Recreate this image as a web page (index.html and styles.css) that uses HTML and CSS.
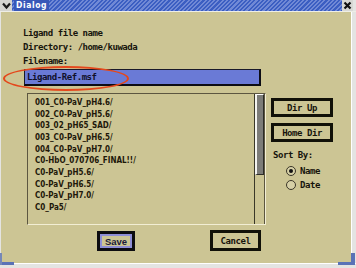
FILE: index.html
```html
<!DOCTYPE html>
<html>
<head>
<meta charset="utf-8">
<title>Dialog</title>
<link rel="stylesheet" href="styles.css">
</head>
<body>
<div class="window">
  <div class="titlebar">
    <span class="menu-icon"><svg width="11" height="11" viewBox="0 0 11 11"><path d="M2 3.5 L5.5 7.5 L9 3.5" fill="none" stroke="#1a1a1a" stroke-width="2.2"/></svg></span>
    <span class="title-area"><span class="title">Dialog</span></span>
    <span class="close"><svg width="11" height="11" viewBox="0 0 11 11"><path d="M2.5 2.5 L8.5 8.5 M8.5 2.5 L2.5 8.5" stroke="#111" stroke-width="2.2"/></svg></span>
  </div>
  <div class="frame">
    <div class="labels">
      <div>Ligand file name</div>
      <div>Directory: /home/kuwada</div>
      <div>Filename:</div>
    </div>
    <div class="field-wrap">
      <div class="field">Ligand-Ref.msf</div>
      <div class="highlight"></div>
    </div>
    <div class="main">
      <div class="listbox">
        <ul class="list">
          <li>001_C0-PaV_pH4.6/</li>
          <li>002_C0-PaV_pH5.6/</li>
          <li>003_02_pH65_SAD/</li>
          <li>003_C0-PaV_pH6.5/</li>
          <li>004_C0-PaV_pH7.0/</li>
          <li>C0-HbO_070706_FINAL!!/</li>
          <li>C0-PaV_pH5.6/</li>
          <li>C0-PaV_pH6.5/</li>
          <li>C0-PaV_pH7.0/</li>
          <li>C0_Pa5/</li>
        </ul>
        <div class="scrollbar"><div class="thumb"></div></div>
      </div>
      <div class="side">
        <button class="btn">Dir Up</button>
        <button class="btn">Home Dir</button>
        <div class="sort-label">Sort By:</div>
        <div class="radio"><span class="dot checked"></span>Name</div>
        <div class="radio"><span class="dot"></span>Date</div>
      </div>
    </div>
    <div class="actions">
      <button class="save">Save</button>
      <button class="btn cancel">Cancel</button>
    </div>
  </div>
  <div class="bottom-line"></div>
  <div class="corner corner-left"></div>
  <div class="corner corner-right"></div>
</div>
</body>
</html>
```
FILE: styles.css
```css
* { box-sizing: border-box; }
html, body { margin: 0; padding: 0; background: #e6e6e6; }
.window {
  position: relative;
  width: 356px;
  height: 268px;
  overflow: hidden;
  background: #e4e4e2;
  font-family: "DejaVu Sans Mono", "Liberation Mono", monospace;
  font-weight: bold;
  color: #16140c;
}
.titlebar {
  display: flex;
  height: 12px;
  border-bottom: 1px solid #eeeee6;
}
.menu-icon {
  width: 12px;
  height: 11px;
  background: #d4d4d0;
  display: flex;
  align-items: center;
  justify-content: center;
}
.title-area {
  flex: 1;
  background: repeating-linear-gradient(135deg, #3b5ec2 0 1.5px, #7089d6 1.5px 3px);
  display: flex;
  align-items: center;
  padding-left: 2px;
}
.title {
  background: #3858b8;
  color: #ffffff;
  font-family: "DejaVu Sans Condensed", "DejaVu Sans", sans-serif;
  font-size: 8.5px;
  letter-spacing: 0.6px;
  line-height: 11px;
  height: 11px;
  padding: 0 2px;
}
.close {
  width: 11px;
  height: 11px;
  background: #d8d8d4;
  margin-right: 3px;
  display: flex;
  align-items: center;
  justify-content: center;
}
.frame {
  margin-left: 1px;
  width: 351px;
  height: 251px;
  background: #ccc594;
  border-right: 1px solid #ffffff;
  padding: 14px 0 0 22px;
}
.labels {
  font-size: 9px;
  letter-spacing: -0.45px;
  line-height: 14px;
}
.field-wrap {
  position: relative;
  margin: 1px 0 0 1px;
  width: 237px;
}
.field {
  height: 17px;
  background: #6a7ad6;
  border-top: 1px solid #1a1a2a;
  border-left: 1px solid #1a1a2a;
  border-right: 2px solid #0c0c14;
  border-bottom: 2px solid #0c0c14;
  font-size: 9px;
  letter-spacing: -0.45px;
  line-height: 14px;
  padding-left: 2px;
  color: #10102a;
}
.highlight {
  position: absolute;
  left: -21px;
  top: -3px;
  width: 126px;
  height: 25px;
  border: 2px solid #e4481c;
  border-radius: 50%;
}
.main {
  display: flex;
  margin-top: 7px;
  gap: 5px;
}
.listbox {
  margin-left: 4px;
  width: 239px;
  height: 132px;
  display: flex;
  border-top: 1px solid #5c5640;
  border-left: 1px solid #5c5640;
  border-bottom: 1px solid #f2eed4;
  border-right: 1px solid #f2eed4;
}
.list {
  flex: 1;
  list-style: none;
  margin: 0;
  padding: 3px 0 0 7px;
  font-family: "DejaVu Sans Condensed", "Liberation Sans", sans-serif;
  font-size: 8px;
  line-height: 11.67px;
  color: #1e180a;
}
.scrollbar {
  width: 11px;
  border-left: 1px solid #3a3828;
  border-right: 1px solid #5c5640;
}
.thumb {
  height: 81px;
  background: #7c7c78;
  border-top: 1px solid #ffffff;
  border-left: 2px solid #f4f4f0;
  border-right: 1px solid #2c2c28;
  border-bottom: 1px solid #2c2c28;
}
.side {
  width: 62px;
  padding-top: 5px;
  display: flex;
  flex-direction: column;
}
.btn {
  font-family: "DejaVu Sans Mono", "Liberation Mono", monospace;
  font-weight: bold;
  font-size: 9px;
  letter-spacing: -0.45px;
  color: #16140c;
  background: #ccc594;
  border: 3px solid #111108;
  height: 19px;
  padding: 0;
  line-height: 12px;
  text-align: center;
}
.side .btn + .btn { margin-top: 6px; }
.sort-label {
  font-size: 9px;
  letter-spacing: -0.45px;
  line-height: 14px;
  margin-top: 6px;
  padding-left: 2px;
}
.radio {
  display: flex;
  align-items: center;
  gap: 4px;
  padding-left: 15px;
  font-size: 9px;
  letter-spacing: -0.45px;
  line-height: 14px;
}
.sort-label + .radio { margin-top: 2px; }
.dot {
  width: 10px;
  height: 10px;
  border-radius: 50%;
  border: 1px solid #3a3628;
  background: #d6d0a6;
  display: flex;
  align-items: center;
  justify-content: center;
}
.dot.checked::after {
  content: "";
  width: 4px;
  height: 4px;
  border-radius: 50%;
  background: #111;
}
.actions {
  display: flex;
  align-items: flex-start;
  margin-top: 5px;
  padding-left: 74px;
}
.save {
  width: 38px;
  height: 20px;
  margin-top: 1px;
  border: 3px solid #0c0c10;
  box-shadow: inset 0 0 0 2px #8e8ed6;
  background: #ccc594;
  font-family: "Liberation Sans", Arial, sans-serif;
  font-weight: bold;
  font-size: 9.5px;
  color: #1a1a3a;
  padding: 0;
}
.cancel {
  width: 51px;
  height: 21px;
  margin-left: 75px;
}
.bottom-line {
  height: 1px;
  background: #ffffff;
}
.corner {
  position: absolute;
  background: #5a72b6;
}
.corner-left {
  left: 0;
  top: 262px;
  width: 14px;
  height: 3px;
}
.corner-left::before {
  content: "";
  position: absolute;
  left: 0;
  bottom: 0;
  width: 2px;
  height: 12px;
  background: #7688b8;
}
.corner-right {
  right: 1px;
  top: 262px;
  width: 17px;
  height: 3px;
}
.corner-right::before {
  content: "";
  position: absolute;
  right: 0;
  bottom: 0;
  width: 4px;
  height: 12px;
  background: #5a72b6;
}
```
